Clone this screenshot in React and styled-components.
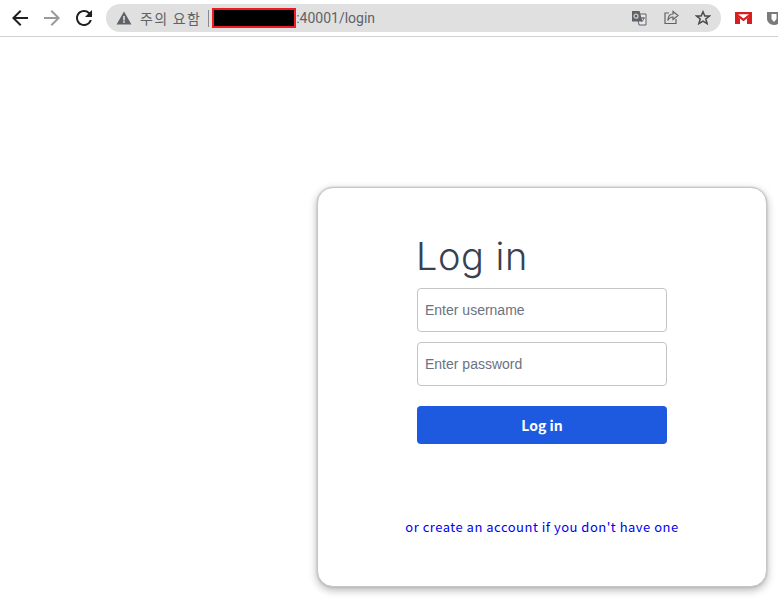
import React from "react";
import styled, { createGlobalStyle } from "styled-components";

const GlobalStyle = createGlobalStyle`
  html, body {
    margin: 0;
    padding: 0;
    background: #fff;
    overflow: hidden;
  }
`;

const Page = styled.div`
  width: 778px;
  height: 601px;
  overflow: hidden;
  font-family: "Liberation Sans", Arial, sans-serif;
`;

const Toolbar = styled.header`
  height: 36px;
  border-bottom: 1px solid #d0d0d0;
  display: flex;
  align-items: center;
  padding-left: 8px;
  white-space: nowrap;
`;

const NavButton = styled.svg`
  width: 24px;
  height: 24px;
  margin-right: 8px;
  flex-shrink: 0;
  fill: ${(p) => (p.$off ? "#9a9a9a" : "#1f1f1f")};
`;

const Omnibox = styled.div`
  width: 615px;
  height: 28px;
  margin-left: 2px;
  border-radius: 14px;
  background: #e0e0e0;
  display: flex;
  align-items: center;
  padding-left: 10px;
  box-sizing: border-box;
  flex-shrink: 0;
  color: #5f6368;
  font-size: 14px;
`;

const WarnLabel = styled.span`
  font-family: "Noto Sans CJK KR", sans-serif;
  font-size: 14px;
  letter-spacing: 1.3px;
  margin-left: 8px;
`;

const Divider = styled.span`
  width: 1px;
  height: 17px;
  background: #8a8a8a;
  margin: 0 3px 0 7px;
`;

const Redacted = styled.span`
  width: 84px;
  height: 20px;
  box-sizing: border-box;
  background: #000;
  border: 2px solid #ed1c24;
`;

const Host = styled.span`
  font-family: "Roboto", sans-serif;
  font-size: 14px;
`;

const OmniIcons = styled.div`
  margin-left: auto;
  display: flex;
  align-items: center;
  gap: 16px;
  padding-right: 10px;
`;

const Extensions = styled.div`
  display: flex;
  align-items: center;
  gap: 15px;
  margin-left: 14px;
  flex-shrink: 0;
`;

const Main = styled.main`
  padding: 150px 0 0 317px;
`;

const Card = styled.section`
  width: 450px;
  height: 400px;
  box-sizing: border-box;
  border: 1px solid #c6c6c6;
  border-radius: 16px;
  background: #fff;
  box-shadow: 0 0 2px rgba(0, 0, 0, 0.2), 0 3px 8px rgba(0, 0, 0, 0.3);
  padding: 45px 99px 0;
`;

const Title = styled.h1`
  margin: 0 0 8px -1px;
  font-family: "Inter", sans-serif;
  font-weight: 300;
  font-size: 38px;
  line-height: 47px;
  letter-spacing: 0.5px;
  color: #374151;
`;

const Field = styled.input`
  display: block;
  width: 250px;
  height: 44px;
  box-sizing: border-box;
  margin-bottom: 10px;
  padding: 0 7px;
  border: 1px solid #c4c4c4;
  border-radius: 4px;
  font-family: "Liberation Sans", Arial, sans-serif;
  font-size: 14px;
  outline: none;
  &::placeholder {
    color: #6b7280;
    opacity: 1;
  }
`;

const Submit = styled.button`
  display: block;
  width: 250px;
  height: 38px;
  margin-top: 20px;
  border: 0;
  border-radius: 4px;
  background: #1d5adf;
  color: #fff;
  font-family: "Noto Sans CJK KR", sans-serif;
  font-weight: 700;
  font-size: 14px;
`;

const SignupLink = styled.a`
  display: block;
  width: 300px;
  margin: 73px 0 0 -25px;
  text-align: center;
  color: #0000ee;
  font-family: "Noto Sans CJK KR", sans-serif;
  font-size: 13px;
  line-height: 20px;
  letter-spacing: 0.5px;
`;

const WarnIcon = () => (
  <svg width="16" height="16" viewBox="0 0 16 16">
    <path d="M8 1.5 15.5 14.5H.5Z" fill="#5f6368" />
    <rect x="7.2" y="6" width="1.6" height="4.5" fill="#e0e0e0" />
    <rect x="7.2" y="11.2" width="1.6" height="1.6" fill="#e0e0e0" />
  </svg>
);

const TranslateIcon = () => (
  <svg width="16" height="16" viewBox="0 0 16 16">
    <path d="M6 4h9v11H8Z" fill="#e8e8e8" stroke="#5f6368" />
    <path d="M1 1h7.5l3 10.5H1Z" fill="#5f6368" />
    <circle cx="5" cy="6.2" r="2" fill="none" stroke="#d0d0d0" strokeWidth="1.2" />
    <path d="M10 8h4M12 7v1M13 8c-.4 1.6-1.4 3-2.6 4" stroke="#5f6368" fill="none" />
  </svg>
);

const ShareIcon = () => (
  <svg width="16" height="16" viewBox="0 0 16 16" fill="none" stroke="#5f6368" strokeWidth="1.2">
    <path d="M6 3H2v10.5h11V9" />
    <path d="M10 1.5 15 5.5 10 9.5V7C7.5 7 6 8 4.8 10.5 5 6.5 7 4 10 4Z" />
  </svg>
);

const StarIcon = () => (
  <svg width="16" height="16" viewBox="0 0 16 16" fill="none" stroke="#4a4a4a" strokeWidth="1.5">
    <path d="M8 1.8 9.8 6h4.6l-3.6 3 1.3 4.6L8 11.1l-4.1 2.5L5.2 9 1.6 6h4.6Z" />
  </svg>
);

const GmailIcon = () => (
  <svg width="17" height="12" viewBox="0 0 17 12">
    <rect width="17" height="12" fill="#d81f1f" />
    <path d="M3 2.2h11L8.5 6.6Z M3 5l5.5 4.2L14 5v7H3Z" fill="#fff" />
    <path d="M3 5v7h2V6.5ZM14 5v7h-2V6.5Z" fill="#d81f1f" />
  </svg>
);

const PocketIcon = () => (
  <svg width="14" height="13" viewBox="0 0 14 13">
    <path d="M0 0h14v7a7 6 0 0 1-14 0Z" fill="#7a7a7a" />
    <path d="M4.5 2h5v5L7 10 4.5 7Z" fill="#fff" />
  </svg>
);

export default function App() {
  return (
    <Page>
      <GlobalStyle />
      <Toolbar>
        <NavButton viewBox="0 0 24 24">
          <path d="M20 11H7.83l5.59-5.59L12 4l-8 8 8 8 1.41-1.41L7.83 13H20v-2z" />
        </NavButton>
        <NavButton $off viewBox="0 0 24 24">
          <path d="M4 11h12.17l-5.59-5.59L12 4l8 8-8 8-1.41-1.41L16.17 13H4v-2z" />
        </NavButton>
        <NavButton viewBox="0 0 24 24">
          <path d="M17.65 6.35A7.958 7.958 0 0 0 12 4c-4.42 0-7.99 3.58-7.99 8s3.57 8 7.99 8c3.73 0 6.84-2.55 7.73-6h-2.08A5.99 5.99 0 0 1 12 18c-3.31 0-6-2.69-6-6s2.69-6 6-6c1.66 0 3.14.69 4.22 1.78L13 11h7V4l-2.35 2.35z" />
        </NavButton>
        <Omnibox>
          <WarnIcon />
          <WarnLabel>주의 요함</WarnLabel>
          <Divider />
          <Redacted />
          <Host>:40001/login</Host>
          <OmniIcons>
            <TranslateIcon />
            <ShareIcon />
            <StarIcon />
          </OmniIcons>
        </Omnibox>
        <Extensions>
          <GmailIcon />
          <PocketIcon />
        </Extensions>
      </Toolbar>
      <Main>
        <Card>
          <Title>Log in</Title>
          <Field placeholder="Enter username" />
          <Field type="password" placeholder="Enter password" />
          <Submit>Log in</Submit>
          <SignupLink>or create an account if you don't have one</SignupLink>
        </Card>
      </Main>
    </Page>
  );
}
